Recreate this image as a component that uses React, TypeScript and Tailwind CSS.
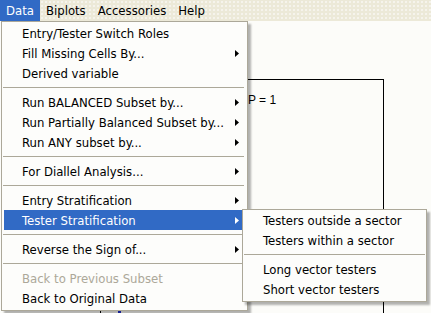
import React from 'react'

type Entry =
  | { kind: 'item'; label: string; sub?: boolean; active?: boolean; disabled?: boolean }
  | { kind: 'sep' }

const dataMenu: Entry[] = [
  { kind: 'item', label: 'Entry/Tester Switch Roles' },
  { kind: 'item', label: 'Fill Missing Cells By...', sub: true },
  { kind: 'item', label: 'Derived variable' },
  { kind: 'sep' },
  { kind: 'item', label: 'Run BALANCED Subset by...', sub: true },
  { kind: 'item', label: 'Run Partially Balanced Subset by...', sub: true },
  { kind: 'item', label: 'Run ANY subset by...', sub: true },
  { kind: 'sep' },
  { kind: 'item', label: 'For Diallel Analysis...', sub: true },
  { kind: 'sep' },
  { kind: 'item', label: 'Entry Stratification', sub: true },
  { kind: 'item', label: 'Tester Stratification', sub: true, active: true },
  { kind: 'sep' },
  { kind: 'item', label: 'Reverse the Sign of...', sub: true },
  { kind: 'sep' },
  { kind: 'item', label: 'Back to Previous Subset', disabled: true },
  { kind: 'item', label: 'Back to Original Data' },
]

const testerMenu: Entry[] = [
  { kind: 'item', label: 'Testers outside a sector' },
  { kind: 'item', label: 'Testers within a sector' },
  { kind: 'sep' },
  { kind: 'item', label: 'Long vector testers' },
  { kind: 'item', label: 'Short vector testers' },
]

function Arrow({ white }: { white?: boolean }) {
  return (
    <svg width="4" height="7" viewBox="0 0 4 7" className="ml-auto mr-[4px] shrink-0">
      <path d="M0 0 L4 3.5 L0 7 Z" fill={white ? '#ffffff' : '#000000'} />
    </svg>
  )
}

function MenuList({ entries }: { entries: Entry[] }) {
  return (
    <>
      {entries.map((e, i) =>
        e.kind === 'sep' ? (
          <div key={i} className="h-[9px] flex items-center -mx-[1px]">
            <div className="h-px w-full bg-[#aca899]" />
          </div>
        ) : (
          <div
            key={i}
            className={
              'h-[20px] flex items-center pl-[18px] pt-[1px] whitespace-nowrap ' +
              (e.active ? 'bg-[#316ac5] text-white' : e.disabled ? 'text-[#aca899]' : 'text-black')
            }
          >
            <span>{e.label}</span>
            {e.sub && <Arrow white={e.active} />}
          </div>
        )
      )}
    </>
  )
}

export default function App() {
  return (
    <div className="relative w-[431px] h-[313px] overflow-hidden bg-[#fcfcf9] font-['DejaVu_Sans_Condensed','DejaVu_Sans',sans-serif] text-[13px] leading-none">
      {/* Menu bar */}
      <div className="flex h-[21px] bg-[#ece9d8] bg-[radial-gradient(#f6f5ee_0.7px,transparent_0.8px)] bg-[length:4px_4px]">
        <div className="h-full flex items-center px-[6px] bg-[#316ac5] text-white">Data</div>
        <div className="h-full flex items-center px-[6px] text-black">Biplots</div>
        <div className="h-full flex items-center px-[6px] text-black">Accessories</div>
        <div className="h-full flex items-center px-[6px] text-black">Help</div>
      </div>

      {/* Plot canvas behind */}
      <div className="absolute left-[100px] top-[79px] w-[284px] h-[300px] border border-black" />
      <div className="absolute left-[248px] top-[94px] font-['Liberation_Sans',sans-serif] text-[12px] text-black">
        P = 1
      </div>
      <div className="absolute left-[118px] top-[310px] w-[3px] h-[3px] bg-[#1f2fd0]" />

      {/* Data dropdown */}
      <div className="absolute left-[1px] top-[21px] w-[247px] border border-[#aca899] bg-[#fdfdfb] pt-[1px] pb-[2px] pl-[2px] pr-[4px] shadow-[3px_3px_2px_rgba(0,0,0,0.3)]">
        <MenuList entries={dataMenu} />
      </div>

      {/* Tester Stratification submenu */}
      <div className="absolute left-[242px] top-[209px] w-[185px] border border-[#aca899] bg-[#fdfdfb] pt-[0px] pb-[2px] pl-[2px] pr-[2px] shadow-[3px_3px_2px_rgba(0,0,0,0.3)]">
        <MenuList entries={testerMenu} />
      </div>
    </div>
  )
}
